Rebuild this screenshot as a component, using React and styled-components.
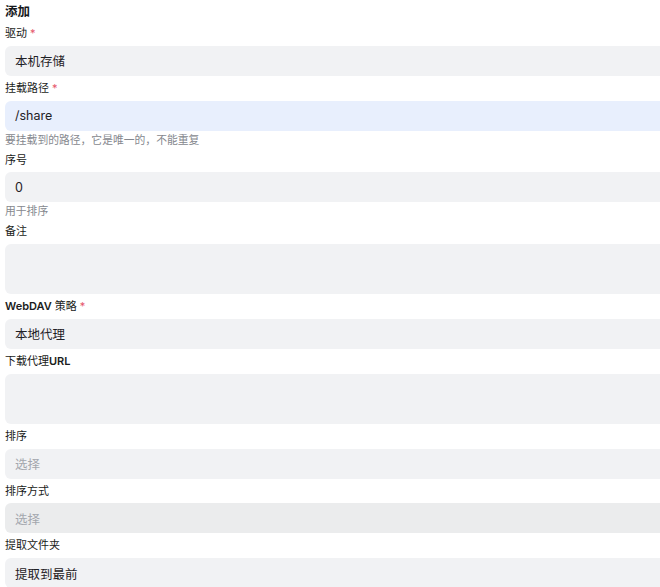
import React from 'react';
import styled, { createGlobalStyle } from 'styled-components';

const GlobalStyle = createGlobalStyle`
  html, body {
    margin: 0;
    padding: 0;
    background: #ffffff;
    overflow: hidden;
  }
  body {
    font-family: "Inter", "Noto Sans CJK SC", sans-serif;
    color: #1f2125;
  }
`;

const Page = styled.div`
  width: 670px;
  padding: 3px 0 0 5px;
  display: flex;
  flex-direction: column;
`;

const Title = styled.h1`
  margin: 0;
  font-size: 12.5px;
  line-height: 18px;
  font-weight: 700;
  color: #16181b;
`;

const Field = styled.div`
  display: flex;
  flex-direction: column;
`;

const Label = styled.label`
  margin: 5px 0 4px 0;
  font-size: 11px;
  line-height: 15.8px;
  font-weight: 400;
  color: #1a1c20;
`;

const Latin = styled.span`
  font-weight: 600;
`;

const Required = styled.span`
  color: #e5566b;
  margin-left: 3px;
`;

const Input = styled.div`
  box-sizing: border-box;
  height: ${p => (p.$tall ? '50px' : '30px')};
  padding: 0 10px;
  display: flex;
  align-items: center;
  border-radius: 6px;
  font-size: 12.5px;
  color: ${p => (p.$placeholder ? '#a3a7ad' : '#1f2125')};
  background: ${p =>
    p.$focus ? '#e8effd' : p.$disabled ? '#ebeced' : '#f1f2f4'};
`;

const Help = styled.div`
  padding-top: 2px;
  font-size: 10.8px;
  line-height: 15px;
  color: #85888e;
`;

const fields = [
  { label: '驱动', required: true, value: '本机存储' },
  { label: '挂载路径', required: true, value: '/share', focus: true, help: '要挂载到的路径，它是唯一的，不能重复' },
  { label: '序号', value: '0', help: '用于排序' },
  { label: '备注', tall: true },
  { label: <><Latin>WebDAV</Latin> 策略</>, key: 'webdav', required: true, value: '本地代理' },
  { label: <>下载代理<Latin>URL</Latin></>, key: 'proxy', tall: true },
  { label: '排序', placeholder: '选择' },
  { label: '排序方式', placeholder: '选择', disabled: true },
  { label: '提取文件夹', value: '提取到最前' },
];

const App = () => (
  <>
    <GlobalStyle />
    <Page>
      <Title>添加</Title>
      {fields.map(f => (
        <Field key={f.key || f.label}>
          <Label>
            {f.label}
            {f.required && <Required>*</Required>}
          </Label>
          <Input
            $tall={f.tall}
            $focus={f.focus}
            $disabled={f.disabled}
            $placeholder={!!f.placeholder}
          >
            {f.value || f.placeholder}
          </Input>
          {f.help && <Help>{f.help}</Help>}
        </Field>
      ))}
    </Page>
  </>
);

export default App;
